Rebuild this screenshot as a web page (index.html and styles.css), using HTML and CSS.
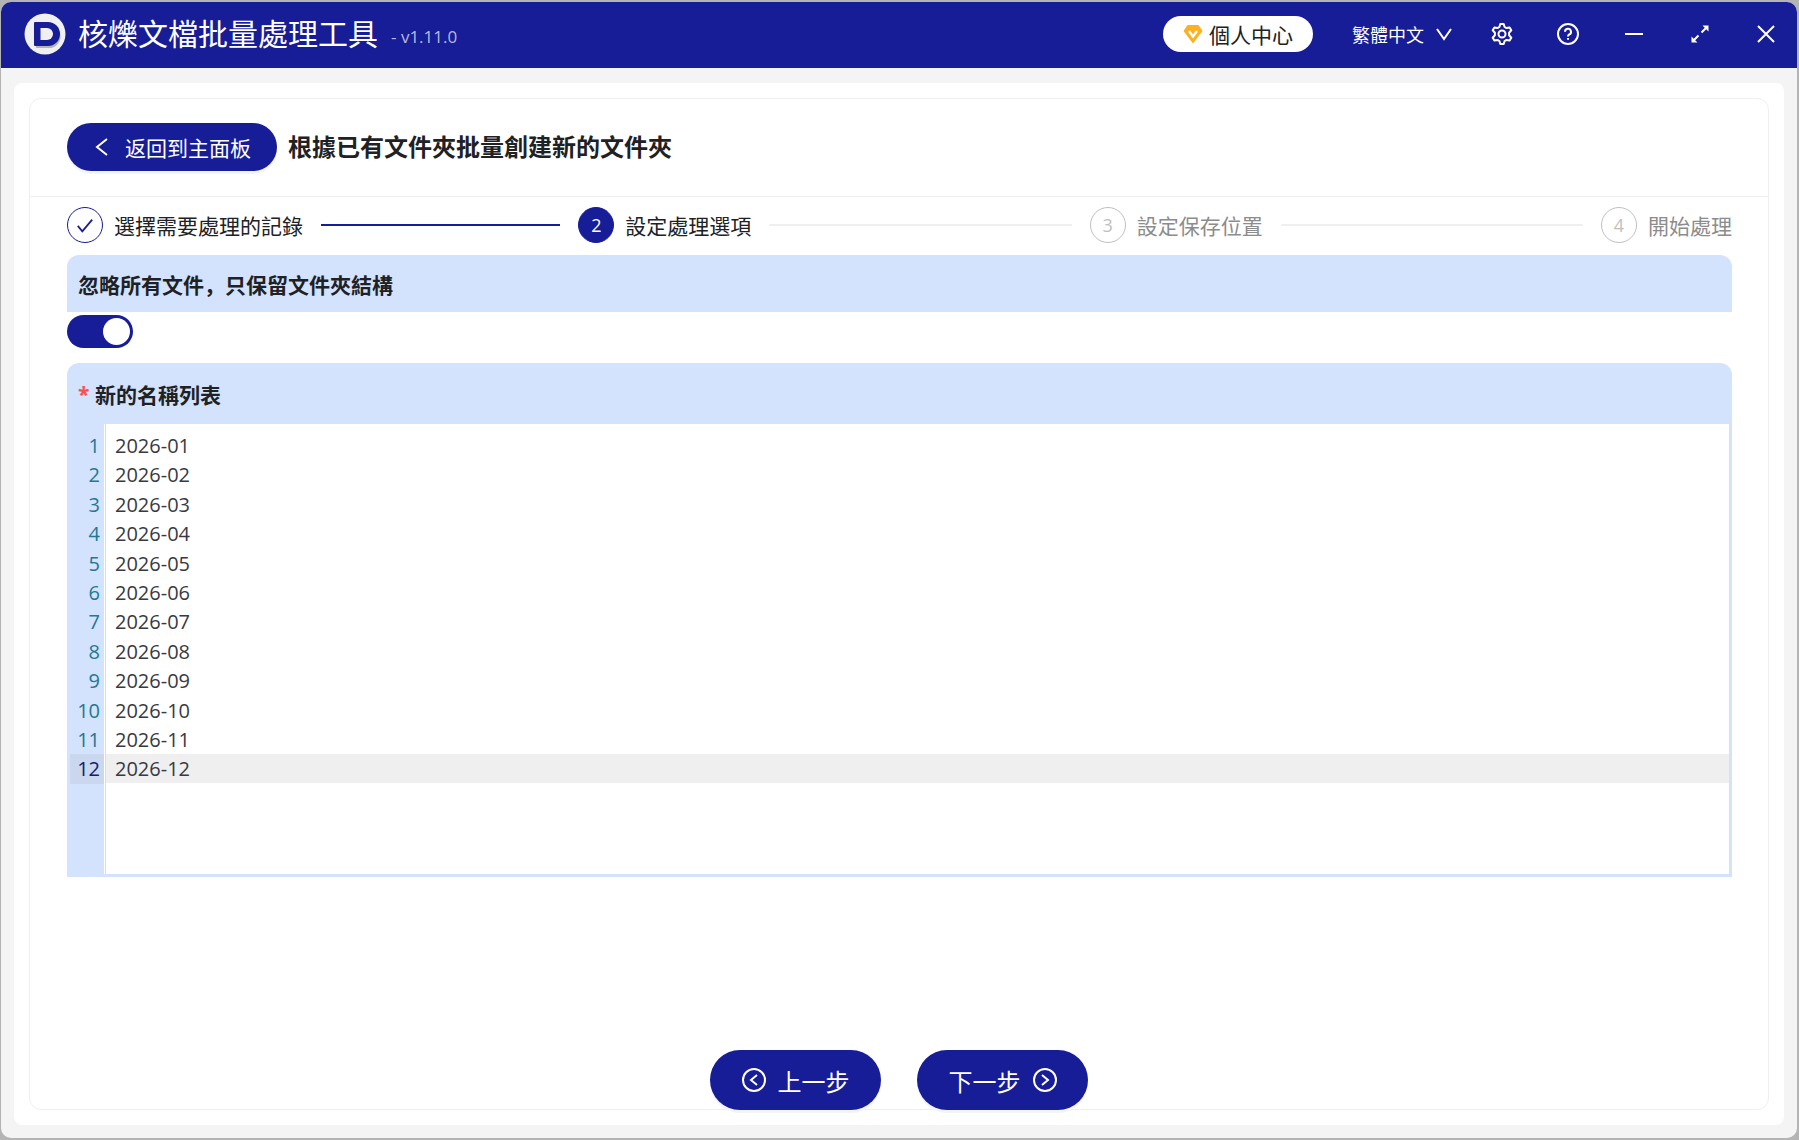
FILE: index.html
```html
<!DOCTYPE html>
<html lang="zh-CN">
<head>
  <meta charset="UTF-8" />
  <meta name="viewport" content="width=device-width, initial-scale=1.0" />
  <title>核爍文檔批量處理工具</title>
  <link rel="stylesheet" href="styles.css">
</head>
<body>
  <div class="window">
    <header class="titlebar">
      <svg class="logo" viewBox="0 0 42 42">
        <circle cx="21" cy="21" r="20.500" fill="#f0f0f0"/>
        <path d="M12 12h13a11 11 0 0 1 0 23H12z" fill="#b4b4b4"/>
        <path d="M11 9h13a12 12 0 0 1 0 24H11a1 1 0 0 1-1-1V10a1 1 0 0 1 1-1z" fill="#171c97"/>
        <path d="M16.500 15h6.500a6 6 0 0 1 0 12h-6.500z" fill="#f0f0f0"/>
      </svg>
      <h1 class="app-name">核爍文檔批量處理工具</h1>
      <span class="version">- v1.11.0</span>
      <div class="actions">
        <button class="account" type="button">
          <svg class="gem" viewBox="0 0 20 20">
            <path d="M4.500 1h11l4 6L10 19.500 .5 7z" fill="#ffb020"/>
            <path d="M6 7l4 5.500L14 7" fill="none" stroke="#fff" stroke-width="2.400"/>
          </svg>
          個人中心
        </button>
        <button class="language" type="button">
          繁體中文
          <svg class="chevron" viewBox="0 0 16 16"><path d="M1 3l7 10 7-10"/></svg>
        </button>
        <button class="icon-btn" type="button" aria-label="設定">
          <svg viewBox="0 0 24 24" stroke-linejoin="round">
            <path d="M10.300 2h3.400l.9 3 1.900 1.100 3.100-.7 1.700 2.900-2.200 2.400v2.600l2.200 2.400-1.700 2.900-3.100-.7-1.900 1.100-.9 3h-3.400l-.9-3-1.900-1.100-3.100.7-1.700-2.900 2.200-2.400v-2.600L2.700 8.300l1.700-2.900 3.100.7L9.400 5z"/>
            <circle cx="12" cy="12" r="3.500"/>
          </svg>
        </button>
        <button class="icon-btn" type="button" aria-label="說明">
          <svg viewBox="0 0 24 24">
            <circle cx="12" cy="12" r="10"/>
            <path d="M9 9.800a3 3 0 1 1 4.200 2.700c-.8.4-1.200.9-1.200 1.900M12 16v1.800"/>
          </svg>
        </button>
        <button class="icon-btn" type="button" aria-label="最小化">
          <svg viewBox="0 0 24 24"><path d="M3 12h18"/></svg>
        </button>
        <button class="icon-btn" type="button" aria-label="最大化">
          <svg viewBox="0 0 24 24">
            <path d="M13.500 10.500L19 5M10.500 13.500L5 19"/>
            <path class="solid" d="M14.500 3.500h6v6zM3.500 14.500v6h6z"/>
          </svg>
        </button>
        <button class="icon-btn" type="button" aria-label="關閉">
          <svg viewBox="0 0 24 24"><path d="M4 4l16 16M20 4L4 20"/></svg>
        </button>
      </div>
    </header>

    <main class="page">
      <section class="card">
        <div class="card-head">
          <button class="back" type="button">
            <svg viewBox="0 0 20 20"><path d="M14 2L4 10l10 8"/></svg>
            返回到主面板
          </button>
          <h2 class="card-title">根據已有文件夾批量創建新的文件夾</h2>
        </div>

        <div class="card-body">
          <ol class="steps">
            <li class="step done">
              <span class="step-icon"><svg viewBox="0 0 20 20"><path d="M2 11l5 6L18 4"/></svg></span>
              <span class="step-name">選擇需要處理的記錄</span>
            </li>
            <li class="step current">
              <span class="step-icon">2</span>
              <span class="step-name">設定處理選項</span>
            </li>
            <li class="step">
              <span class="step-icon">3</span>
              <span class="step-name">設定保存位置</span>
            </li>
            <li class="step">
              <span class="step-icon">4</span>
              <span class="step-name">開始處理</span>
            </li>
          </ol>

          <div class="field">
            <label class="field-label" for="ignore-files">忽略所有文件，只保留文件夾結構</label>
            <input class="switch" type="checkbox" id="ignore-files" checked>
          </div>

          <div class="field list-field">
            <label class="field-label" for="names"><span class="required">*</span>新的名稱列表</label>
            <div class="editor">
              <ol class="gutter">
                <li>1</li>
                <li>2</li>
                <li>3</li>
                <li>4</li>
                <li>5</li>
                <li>6</li>
                <li>7</li>
                <li>8</li>
                <li>9</li>
                <li>10</li>
                <li>11</li>
                <li class="active">12</li>
              </ol>
              <textarea class="names" id="names" spellcheck="false">2026-01
2026-02
2026-03
2026-04
2026-05
2026-06
2026-07
2026-08
2026-09
2026-10
2026-11
2026-12</textarea>
            </div>
          </div>
        </div>

        <div class="card-foot">
          <button class="nav-btn" type="button">
            <svg viewBox="0 0 24 24"><circle cx="12" cy="12" r="11"/><path d="M15 7l-6 5 6 5"/></svg>
            上一步
          </button>
          <button class="nav-btn" type="button">
            下一步
            <svg viewBox="0 0 24 24"><circle cx="12" cy="12" r="11"/><path d="M9 7l6 5-6 5"/></svg>
          </button>
        </div>
      </section>
    </main>
  </div>
</body>
</html>
```

FILE: styles.css
```css
* {
  box-sizing: border-box;
}
html, body {
  margin: 0;
  height: 100%;
}
body {
  display: flex;
  padding: 2px 2px 2px 1px;
  background: #b4b4b4;
  color: #202124;
  font-family: "Open Sans", "Noto Sans CJK SC", sans-serif;
  font-size: 21px;
}
h1, h2, ol {
  margin: 0;
  padding: 0;
}
ol {
  list-style: none;
}
button {
  display: flex;
  align-items: center;
  padding: 0;
  border: 0;
  background: none;
  color: #fff;
  font: inherit;
  cursor: pointer;
}
svg {
  flex: none;
  fill: none;
  stroke: currentColor;
  stroke-width: 2;
}

.window {
  flex: 1;
  display: flex;
  flex-direction: column;
  border-radius: 10px;
  background: #f4f4f4;
  overflow: hidden;
}

/* title bar */
.titlebar {
  flex: none;
  display: flex;
  align-items: center;
  height: 66px;
  padding: 0 7px 2px 23px;
  background: #171c97;
  color: #fff;
}
.logo {
  width: 42px;
  height: 42px;
  stroke: none;
}
.app-name {
  margin-left: 12px;
  font-size: 30px;
  font-weight: 400;
  line-height: 40px;
}
.version {
  margin: 4px 0 0 13px;
  color: #b9bbdf;
  font-size: 17px;
}
.actions {
  display: flex;
  align-items: center;
  margin-left: auto;
}
.account {
  height: 36px;
  padding: 0 20px;
  gap: 6px;
  border-radius: 18px;
  background: #fff;
  color: #202124;
}
.gem {
  width: 20px;
  height: 20px;
  stroke: none;
}
.language {
  gap: 12px;
  margin: 0 26px 0 39px;
  font-size: 18px;
}
.chevron {
  width: 16px;
  height: 16px;
}
.icon-btn {
  justify-content: center;
  width: 48px;
  height: 48px;
}
.icon-btn + .icon-btn {
  margin-left: 18px;
}
.icon-btn svg {
  width: 24px;
  height: 24px;
}
.icon-btn .solid {
  fill: currentColor;
  stroke: none;
}

/* page */
.page {
  flex: 1;
  display: flex;
  margin: 15px 13px 13px;
  padding: 15px;
  border-radius: 8px;
  background: #fff;
}
.card {
  flex: 1;
  display: flex;
  flex-direction: column;
  border: 1px solid #efefef;
  border-radius: 12px;
}
.card-head {
  display: flex;
  align-items: center;
  gap: 11px;
  padding: 24px 37px 25px;
  border-bottom: 1px solid #efefef;
}
.back {
  gap: 12px;
  height: 48px;
  padding: 0 26px;
  border-radius: 24px;
  background: #171c97;
  box-shadow: 0 3px 0 #f4f4f4;
}
.back svg {
  width: 20px;
  height: 20px;
}
.card-title {
  font-size: 24px;
  font-weight: 700;
  line-height: 36px;
}
.card-body {
  padding: 10px 36px 0 37px;
}

/* steps */
.steps {
  display: flex;
  height: 36px;
  margin-bottom: 12px;
}
.step {
  flex: 1;
  display: flex;
  align-items: center;
  color: #8c8c8c;
}
.step:last-child {
  flex: none;
}
.step:not(:last-child)::after {
  content: "";
  flex: 1;
  height: 2px;
  margin: 0 18px;
  background: #efefef;
}
.step.done::after {
  background: #171c97;
}
.step.done, .step.current {
  color: #202124;
}
.step-icon {
  display: flex;
  justify-content: center;
  align-items: center;
  width: 36px;
  height: 36px;
  margin-right: 11px;
  border: 1px solid #bfbfbf;
  border-radius: 50%;
  color: #bfbfbf;
  font-size: 18px;
}
.step-icon svg {
  width: 18px;
  height: 18px;
}
.done .step-icon {
  border-color: #171c97;
  color: #171c97;
}
.current .step-icon {
  border-color: #171c97;
  background: #171c97;
  color: #fff;
}

/* options */
.field-label {
  display: flex;
  align-items: center;
  height: 57px;
  padding: 0 11px;
  border-radius: 12px 12px 0 0;
  background: #d3e3fd;
  font-weight: 700;
}
.required {
  width: 17px;
  color: #ff4d4f;
}
.switch {
  appearance: none;
  display: block;
  width: 66px;
  height: 33px;
  margin: 3px 0 15px;
  padding: 3px;
  border-radius: 17px;
  background: #bfbfbf;
  cursor: pointer;
}
.switch::before {
  content: "";
  display: block;
  width: 27px;
  height: 27px;
  border-radius: 50%;
  background: #fff;
}
.switch:checked {
  background: #171c97;
}
.switch:checked::before {
  margin-left: auto;
}
.list-field .field-label {
  height: 61px;
}
.editor {
  display: flex;
  height: 453px;
  border: 3px solid #d3e3fd;
  border-top: 0;
  font-size: 20px;
  line-height: 1.47;
}
.gutter {
  width: 35px;
  padding-top: 7px;
  border-right: 1px solid #fff;
  background: #d3e3fd;
  color: #237893;
  text-align: right;
}
.gutter li {
  padding-right: 4px;
}
.gutter .active {
  background: #cbd7ef;
  color: #0b216f;
}
.names {
  flex: 1;
  padding: 7px 9px;
  border: 0;
  border-left: 1px solid #ddd;
  outline: 0;
  background: linear-gradient(#efefef, #efefef) no-repeat 0 calc(7px + 11lh) / 100% 1lh;
  color: #383a42;
  font: inherit;
  resize: none;
}

/* footer buttons */
.card-foot {
  display: flex;
  justify-content: center;
  gap: 36px;
  margin-top: auto;
}
.nav-btn {
  justify-content: center;
  gap: 12px;
  width: 171px;
  height: 60px;
  margin-bottom: -1px;
  border-radius: 30px;
  background: #171c97;
  box-shadow: 0 3px 0 #f4f4f4;
  font-size: 24px;
}
.nav-btn svg {
  width: 24px;
  height: 24px;
}
```
